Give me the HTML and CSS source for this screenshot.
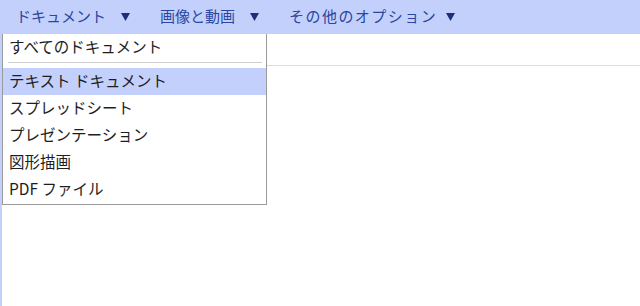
FILE: index.html
```html
<!DOCTYPE html>
<html lang="ja">
<head>
<meta charset="utf-8">
<link rel="stylesheet" href="styles.css">
</head>
<body>
<div class="topbar">
  <div class="tab">ドキュメント<svg class="arrow" width="9" height="8" viewBox="0 0 9 8"><path d="M0 0H9L4.5 8Z"/></svg></div>
  <div class="tab">画像と動画<svg class="arrow" width="9" height="8" viewBox="0 0 9 8"><path d="M0 0H9L4.5 8Z"/></svg></div>
  <div class="tab wide">その他のオプション<svg class="arrow" width="9" height="8" viewBox="0 0 9 8"><path d="M0 0H9L4.5 8Z"/></svg></div>
</div>
<div class="main">
  <div class="toolrow"></div>
</div>
<div class="menu">
  <div class="item">すべてのドキュメント</div>
  <div class="sep"></div>
  <div class="item active">テキスト ドキュメント</div>
  <div class="item">スプレッドシート</div>
  <div class="item">プレゼンテーション</div>
  <div class="item">図形描画</div>
  <div class="item">PDF ファイル</div>
</div>
</body>
</html>
```
FILE: styles.css
```css
html, body {
  margin: 0;
  padding: 0;
  height: 100%;
  background: #ffffff;
  font-family: "Noto Sans CJK JP", "Noto Sans", sans-serif;
  font-size: 15px;
}
.topbar {
  height: 34px;
  background: #c3d0fb;
  display: flex;
  align-items: center;
  padding-left: 16px;
  gap: 30px;
}
.tab {
  display: flex;
  align-items: center;
  gap: 15px;
  color: #2a469f;
  line-height: 20px;
  padding-bottom: 2px;
}
.tab.wide {
  letter-spacing: 1.45px;
  gap: 9px;
}
.arrow {
  fill: #1c2f7a;
  margin-top: 2px;
}
.main {
  height: calc(100% - 34px);
  border-left: 2px solid #c3d0fb;
  box-sizing: border-box;
}
.toolrow {
  height: 31px;
  border-bottom: 1px solid #dcdcdc;
}
.menu {
  position: absolute;
  top: 34px;
  left: 2px;
  width: 263px;
  background: #fff;
  border: 1px solid #9a9a9a;
  border-top: none;
  padding-bottom: 1px;
}
.item {
  height: 27px;
  line-height: 25px;
  padding-left: 6px;
  color: #1e1e1e;
  font-size: 15.5px;
  white-space: nowrap;
}
.item.active {
  background: #c3d0fb;
}
.sep {
  height: 1px;
  background: #cfcfcf;
  margin: 1px 4px 5px 5px;
}
```
